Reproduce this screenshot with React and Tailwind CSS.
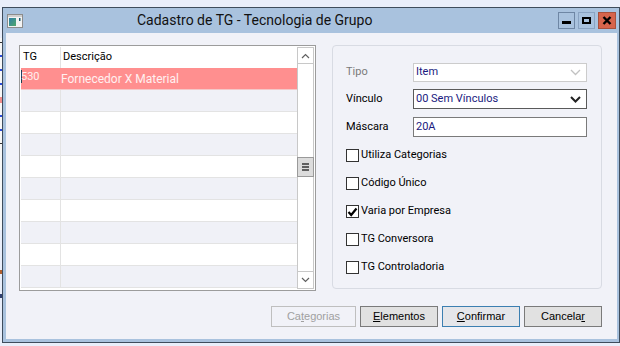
import React from 'react';

const rows = Array.from({ length: 9 });

const checks = [
  { label: 'Utiliza Categorias', checked: false },
  { label: 'Código Único', checked: false },
  { label: 'Varia por Empresa', checked: true },
  { label: 'TG Conversora', checked: false },
  { label: 'TG Controladoria', checked: false },
];

function TitleIcon() {
  return (
    <svg width="16" height="14" viewBox="0 0 16 14">
      <defs>
        <linearGradient id="ig" x1="0" y1="0" x2="1" y2="1">
          <stop offset="0" stopColor="#2f7fa8" />
          <stop offset="1" stopColor="#4fa86a" />
        </linearGradient>
      </defs>
      <rect x="0.5" y="0.5" width="15" height="13" fill="#f3f3f3" stroke="#8c8c8c" />
      <rect x="1" y="1" width="14" height="2" fill="#cfcfcf" />
      <rect x="2" y="4" width="7" height="8" fill="url(#ig)" />
      <rect x="12" y="4" width="1.5" height="3" fill="#1f5f6f" />
    </svg>
  );
}

function Chevron({ color = '#000', width = 1.6 }) {
  return (
    <svg width="11" height="7" viewBox="0 0 11 7">
      <polyline points="1,1 5.5,5.5 10,1" fill="none" stroke={color} strokeWidth={width} />
    </svg>
  );
}

function Checkbox({ checked }) {
  return (
    <span className="w-[13px] h-[13px] border border-[#333333] bg-white flex items-center justify-center">
      {checked && (
        <svg width="11" height="10" viewBox="0 0 11 10">
          <path d="M1.5 5 L4.2 8 L9.5 1.5" fill="none" stroke="#000" strokeWidth="2.2" />
        </svg>
      )}
    </span>
  );
}

const App = () => {
  return (
    <div className="w-[620px] h-[346px] bg-[#e9eefa] flex overflow-hidden font-['Roboto',sans-serif] text-[11px] text-black">
      {/* what shows behind the dialog */}
      <div className="w-[2px] flex flex-col">
        <div className="h-[38px]" />
        <div className="h-[192px] bg-[#f7f7f7] flex flex-col gap-[12px] pt-[4px]">
          <div className="h-px bg-[#333]" />
          <div className="h-[2px] bg-[#2a4bd8]" />
          <div className="h-[2px] bg-[#2a4bd8]" />
          <div className="h-[2px] bg-[#2a4bd8]" />
          <div className="h-[6px] bg-[#f08c8c]" />
          <div className="h-[2px] bg-[#2a4bd8]" />
          <div className="h-[2px] bg-[#2a4bd8]" />
          <div className="h-px bg-[#333]" />
        </div>
        <div className="h-[40px]" />
        <div className="h-[4px] bg-[#b06030]" />
        <div className="h-[20px]" />
        <div className="h-[4px] bg-[#304070]" />
      </div>

      {/* dialog window */}
      <div className="w-[618px] h-[336px] mt-[7px] border border-[#3e4c5c] bg-[#a9c2de] flex flex-col">
        {/* title bar */}
        <div className="h-[25px] flex items-center pl-[4px] pr-[3px]">
          <TitleIcon />
          <span className="ml-[114px] text-[14px] text-[#111]">
            Cadastro de TG - Tecnologia de Grupo
          </span>
          <div className="ml-auto flex items-center gap-[3px]">
            <div className="w-[17px] h-[17px] border border-[#6e86a4] flex items-end justify-center pb-[4px]">
              <div className="w-[9px] h-[3px] bg-black" />
            </div>
            <div className="w-[17px] h-[17px] border border-[#8aa3c2] flex items-center justify-center">
              <div className="w-[9px] h-[7px] border-2 border-black" />
            </div>
            <div className="w-[18px] h-[17px] border border-[#a8503c] bg-[#d6644c] flex items-center justify-center">
              <svg width="10" height="9" viewBox="0 0 10 9">
                <path d="M1.5 1 L8.5 8 M8.5 1 L1.5 8" stroke="#000" strokeWidth="2.4" />
              </svg>
            </div>
          </div>
        </div>

        {/* client area */}
        <div className="flex-1 ml-[3px] mr-[2px] mb-[3px] bg-[#f1f2f8] flex flex-col pt-[12px] pl-[13px] pr-[15px]">
          <div className="flex gap-[16px]">
            {/* grid */}
            <div className="w-[297px] h-[246px] border border-[#9c9c9c] bg-white p-px flex">
              <div className="w-[276px] flex flex-col">
                <div className="h-[21px] flex bg-white">
                  <div className="w-[40px] border-r border-[#e2e2e2] pl-[2px] flex items-center">TG</div>
                  <div className="flex-1 pl-[2px] flex items-center">Descrição</div>
                </div>
                <div className="h-[22px] bg-[#ff8f8f] text-[#fff0f0] text-[12px] flex border-b border-[#f4c8c8]">
                  <div className="w-[40px] flex items-start pt-[1px]">
                    <span className="w-px h-[13px] bg-[#1f3f4f] mt-[1px]" />
                    <span className="-ml-px text-[11px]">530</span>
                  </div>
                  <div className="flex-1 flex items-center">Fornecedor X Material</div>
                </div>
                {rows.map((_, i) => (
                  <div
                    key={i}
                    className={`h-[22px] flex border-b border-[#e3e3e3] ${i % 2 === 0 ? 'bg-[#f0f1f7]' : 'bg-white'}`}
                  >
                    <div className="w-[40px] border-r border-[#e3e3e3]" />
                    <div className="flex-1" />
                  </div>
                ))}
              </div>
              {/* scrollbar */}
              <div className="w-[17px] border border-[#c8c8c8] bg-white flex flex-col">
                <div className="h-[16px] border-b border-[#c8c8c8] flex items-center justify-center">
                  <svg width="9" height="6" viewBox="0 0 9 6">
                    <polyline points="1,5 4.5,1.5 8,5" fill="none" stroke="#606060" strokeWidth="1.2" />
                  </svg>
                </div>
                <div className="h-[93px]" />
                <div className="h-[20px] -mx-px border border-[#9a9a9a] bg-[#dcdcdc] flex flex-col items-center justify-center gap-px">
                  <div className="w-[7px] h-[2px] bg-[#606060]" />
                  <div className="w-[7px] h-[2px] bg-[#606060]" />
                  <div className="w-[7px] h-[2px] bg-[#606060]" />
                </div>
                <div className="flex-1" />
                <div className="h-[17px] border-t border-[#c8c8c8] flex items-center justify-center">
                  <svg width="9" height="6" viewBox="0 0 9 6">
                    <polyline points="1,1 4.5,4.5 8,1" fill="none" stroke="#606060" strokeWidth="1.2" />
                  </svg>
                </div>
              </div>
            </div>

            {/* settings group */}
            <div className="w-[270px] h-[244px] border border-[#d8dbe3] rounded-[4px] pt-[17px] pl-[13px] pr-[14px] flex flex-col">
              <div className="flex items-center h-[19px]">
                <span className="w-[67px] text-[#7a7a7a]">Tipo</span>
                <div className="flex-1 h-[19px] border border-[#cccccc] bg-white flex items-center pl-[2px] pr-[5px]">
                  <span className="flex-1 text-[#1a1a80]">Item</span>
                  <Chevron color="#c2c2c2" width={1.3} />
                </div>
              </div>
              <div className="flex items-center h-[20px] mt-[7px]">
                <span className="w-[67px]">Vínculo</span>
                <div className="flex-1 h-[20px] border border-[#5a5a5a] bg-white flex items-center pl-[2px] pr-[5px]">
                  <span className="flex-1 text-[#1a1a80]">00 Sem Vínculos</span>
                  <Chevron color="#222" width={2} />
                </div>
              </div>
              <div className="flex items-center h-[20px] mt-[8px]">
                <span className="w-[67px]">Máscara</span>
                <div className="flex-1 h-[20px] border border-[#7a7a7a] bg-white flex items-center pl-[2px]">
                  <span className="text-[#1a1a80]">20A</span>
                </div>
              </div>
              <div className="flex flex-col gap-[15px] mt-[12px]">
                {checks.map((c) => (
                  <div key={c.label} className="flex items-center h-[13px] gap-[2px]">
                    <Checkbox checked={c.checked} />
                    <span>{c.label}</span>
                  </div>
                ))}
              </div>
            </div>
          </div>

          {/* buttons */}
          <div className="flex justify-end gap-[4px] mt-[15px] font-['Liberation_Sans',sans-serif]">
            <button className="w-[85px] h-[21px] border border-[#bfbfbf] bg-[#f1f2f8] text-[#a0a0a0]">
              Ca<u>t</u>egorias
            </button>
            <button className="w-[78px] h-[21px] border border-[#7a7a7a] bg-[#e1e1e1]">
              <u>E</u>lementos
            </button>
            <button className="w-[78px] h-[21px] border border-[#3c7fb1] bg-[#e5e6ea]">
              <u>C</u>onfirmar
            </button>
            <button className="w-[78px] h-[21px] border border-[#7a7a7a] bg-[#e1e1e1]">
              Cancela<u>r</u>
            </button>
          </div>
        </div>
      </div>
    </div>
  );
};

export default App;
